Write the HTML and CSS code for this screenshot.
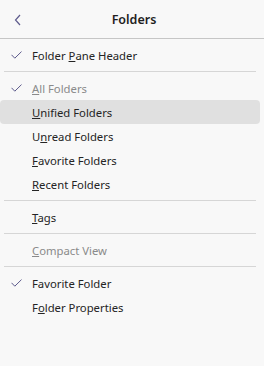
FILE: index.html
```html
<!DOCTYPE html>
<html>
<head>
<meta charset="utf-8">
<link rel="stylesheet" href="styles.css">
</head>
<body>
<div class="panel">
  <div class="header">
    <svg class="back" width="8" height="12" viewBox="0 0 8 12"><path d="M6 1 L1.5 6 L6 11" fill="none" stroke="#5e5b8c" stroke-width="1.2"/></svg>
    <div class="title">Folders</div>
  </div>
  <div class="menu">
    <div class="item"><span class="check"><svg width="11" height="8" viewBox="0 0 11 8"><path d="M0.5 3.8 L3.8 7.2 L10.5 0.6" fill="none" stroke="#5e5b8c" stroke-width="1"/></svg></span><span class="label">Folder <u>P</u>ane Header</span></div>
    <div class="sep"></div>
    <div class="item disabled"><span class="check"><svg width="11" height="8" viewBox="0 0 11 8"><path d="M0.5 3.8 L3.8 7.2 L10.5 0.6" fill="none" stroke="#5e5b8c" stroke-width="1"/></svg></span><span class="label"><u>A</u>ll Folders</span></div>
    <div class="item active"><span class="check"></span><span class="label"><u>U</u>nified Folders</span></div>
    <div class="item"><span class="check"></span><span class="label">U<u>n</u>read Folders</span></div>
    <div class="item"><span class="check"></span><span class="label"><u>F</u>avorite Folders</span></div>
    <div class="item"><span class="check"></span><span class="label"><u>R</u>ecent Folders</span></div>
    <div class="sep"></div>
    <div class="item"><span class="check"></span><span class="label"><u>T</u>ags</span></div>
    <div class="sep"></div>
    <div class="item disabled"><span class="check"></span><span class="label"><u>C</u>ompact View</span></div>
    <div class="sep"></div>
    <div class="item"><span class="check"><svg width="11" height="8" viewBox="0 0 11 8"><path d="M0.5 3.8 L3.8 7.2 L10.5 0.6" fill="none" stroke="#5e5b8c" stroke-width="1"/></svg></span><span class="label">Favorite Folder</span></div>
    <div class="item"><span class="check"></span><span class="label">F<u>o</u>lder Properties</span></div>
  </div>
</div>
</body>
</html>
```

FILE: styles.css
```css
html, body {
  margin: 0;
  padding: 0;
  background: #f8f8f8;
}
body {
  width: 264px;
  height: 366px;
  overflow: hidden;
  font-family: "Noto Sans", "Open Sans", sans-serif;
  font-size: 11.3px;
  color: #242424;
}
.panel {
  display: flex;
  flex-direction: column;
}
.header {
  height: 38px;
  border-bottom: 1px solid #c6c6c6;
  display: grid;
  grid-template-columns: 1fr;
  align-items: center;
  position: relative;
}
.back {
  position: absolute;
  left: 14px;
  top: 14px;
}
.title {
  text-align: center;
  font-weight: 600;
  font-size: 12.5px;
  padding-left: 4px;
  color: #1f1f1f;
}
.menu {
  padding-top: 4px;
  display: flex;
  flex-direction: column;
}
.item {
  height: 24px;
  display: flex;
  align-items: center;
  margin-right: 4px;
  border-radius: 4px;
}
.item.active {
  background: #e0e0e0;
}
.item.disabled {
  color: #8a8a8a;
}
.check {
  width: 32px;
  flex: none;
  display: flex;
  align-items: center;
  padding-left: 11px;
  box-sizing: border-box;
}
.label u {
  text-decoration-thickness: 1px;
  text-underline-offset: 1px;
}
.sep {
  height: 1px;
  background: #d6d6d6;
  margin: 4px 8px 4px 4px;
}
```
